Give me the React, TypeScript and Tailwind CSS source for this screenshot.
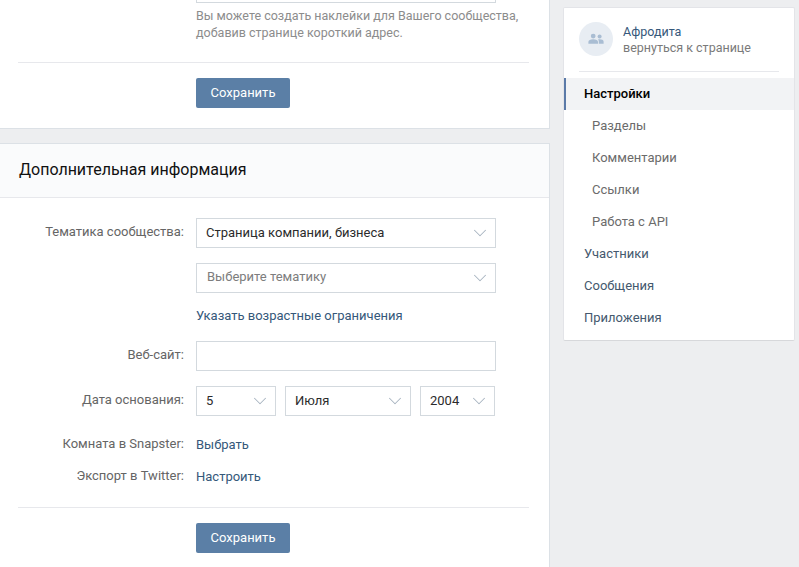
import { ChevronDown } from 'lucide-react';

function Select({ value, width, muted }: { value: string; width: string; muted?: boolean }) {
  return (
    <div className={`flex items-center justify-between h-[30px] bg-white border border-[#d3d9de] pl-[9px] pr-[4px] ${width}`}>
      <span className={muted ? 'text-[#7d7d7d] pl-px -translate-y-px' : 'text-[#2b2b2b]'}>{value}</span>
      <ChevronDown size={22} strokeWidth={1.1} className="text-[#a8b4c0]" />
    </div>
  );
}

function Row({ label, children, className }: { label?: string; children: React.ReactNode; className?: string }) {
  return (
    <div className={`flex items-center ${className ?? ''}`}>
      <div className="w-[184px] mr-[12px] text-right text-[#656565] shrink-0 -translate-y-px">{label}</div>
      {children}
    </div>
  );
}

function SaveButton() {
  return (
    <div className="ml-[196px]">
      <button className="w-[94px] h-[30px] rounded-[2px] bg-[#5b7fa6] text-white text-[13px]">Сохранить</button>
    </div>
  );
}

const menu = [
  { label: 'Настройки', active: true },
  { label: 'Разделы', sub: true },
  { label: 'Комментарии', sub: true },
  { label: 'Ссылки', sub: true },
  { label: 'Работа с API', sub: true },
  { label: 'Участники' },
  { label: 'Сообщения' },
  { label: 'Приложения' },
];

export default function App() {
  return (
    <div className="flex h-[567px] w-[799px] overflow-hidden bg-[#edeef0] font-['Roboto',sans-serif] text-[13px] leading-[18px]">
      {/* Main column */}
      <div className="w-[550px] shrink-0">
        <div className="h-[129px] bg-white border-r border-b border-[#dce1e6]">
          <div className="ml-[196px] w-[300px] h-[3px] border-b border-x border-[#d3d9de]" />
          <div className="ml-[196px] mt-[4px] w-[340px] text-[12.5px] text-[#8c8c8c] leading-[17px] whitespace-nowrap">
            <div>Вы можете создать наклейки для Вашего сообщества,</div>
            <div>добавив странице короткий адрес.</div>
          </div>
          <div className="ml-[18px] mr-[20px] mt-[21px] border-t border-[#e7e8ec]" />
          <div className="mt-[15px]">
            <SaveButton />
          </div>
        </div>

        <div className="mt-[14px] bg-white border-r border-t border-[#dce1e6] h-[424px]">
          <div className="h-[54px] flex items-center px-[19px] pb-[2px] bg-[#fafbfc] border-b border-[#e7e8ec] text-[16px] text-[#111111]">
            Дополнительная информация
          </div>

          <Row label="Тематика сообщества:" className="mt-[20px]">
            <Select value="Страница компании, бизнеса" width="w-[300px]" />
          </Row>
          <Row className="mt-[15px]">
            <Select value="Выберите тематику" width="w-[300px]" muted />
          </Row>
          <Row className="mt-[14px]">
            <span className="text-[#35587a]">Указать возрастные ограничения</span>
          </Row>
          <Row label="Веб-сайт:" className="mt-[16px]">
            <div className="w-[300px] h-[30px] bg-white border border-[#d3d9de]" />
          </Row>
          <Row label="Дата основания:" className="mt-[15px]">
            <div className="flex gap-[9px]">
              <Select value="5" width="w-[80px]" />
              <Select value="Июля" width="w-[126px]" />
              <Select value="2004" width="w-[75px]" />
            </div>
          </Row>
          <Row label="Комната в Snapster:" className="mt-[20px]">
            <span className="text-[#35587a]">Выбрать</span>
          </Row>
          <Row label="Экспорт в Twitter:" className="mt-[14px]">
            <span className="text-[#35587a]">Настроить</span>
          </Row>
          <div className="ml-[18px] mr-[20px] mt-[21px] border-t border-[#e7e8ec]" />
          <div className="mt-[15px]">
            <SaveButton />
          </div>
        </div>
      </div>

      {/* Sidebar */}
      <div className="ml-[13px] mt-[7px] w-[232px] h-[334px] bg-white rounded-[2px] border border-[#e3e4e8] border-b-[#d7d8db] shrink-0">
        <div className="mx-[15px] h-[64px] flex items-start pt-[14px] border-b border-[#e7e8ec]">
          <div className="w-[34px] h-[34px] rounded-full bg-[#e8edf3] flex items-center justify-center shrink-0">
            <svg width="16" height="12" viewBox="0 0 20 14" fill="#a9bdd3">
              <circle cx="6.5" cy="3.4" r="3" />
              <circle cx="14.5" cy="4" r="2.5" />
              <path d="M0.5 13v-2.500c0-2 2.500-3.200 6-3.200s6 1.200 6 3.200V13z" />
              <path d="M13.500 13v-3c0-1-.4-1.800-1-2.300.6-.2 1.300-.3 2-.3 2.700 0 5 1 5 2.800V13z" />
            </svg>
          </div>
          <div className="ml-[10px] mt-[2px] whitespace-nowrap">
            <div className="text-[12.5px] text-[#35587a] leading-[16px]">Афродита</div>
            <div className="text-[12.5px] text-[#7a7a7a] leading-[16px]">вернуться к странице</div>
          </div>
        </div>
        <div className="mt-[6px]">
          {menu.map(item => (
            <div
              key={item.label}
              className={`h-[32px] flex items-center border-l-2 ${item.sub ? 'pl-[26px] text-[#6b6b6b]' : 'pl-[18px] text-[#45596e]'} ${item.active ? 'border-[#5b7aa8] bg-[#f2f3f5] !text-black font-medium' : 'border-transparent'}`}
            >
              {item.label}
            </div>
          ))}
        </div>
      </div>
    </div>
  );
}
